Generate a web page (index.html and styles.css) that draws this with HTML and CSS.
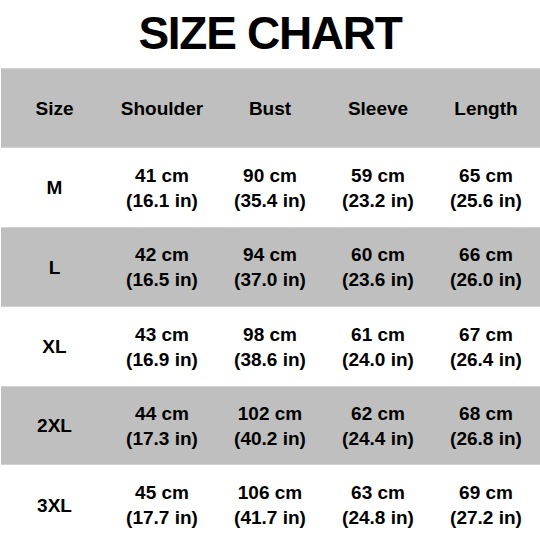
FILE: index.html
```html
<!DOCTYPE html>
<html>
<head>
<meta charset="utf-8">
<link rel="stylesheet" href="styles.css">
</head>
<body>
<div class="page">
  <h1 class="title">SIZE CHART</h1>
  <div class="chart">
    <div class="row shade head">
      <div class="cell">Size</div>
      <div class="cell">Shoulder</div>
      <div class="cell">Bust</div>
      <div class="cell">Sleeve</div>
      <div class="cell">Length</div>
    </div>
    <div class="row r79">
      <div class="cell">M</div>
      <div class="cell">41 cm<br>(16.1 in)</div>
      <div class="cell">90 cm<br>(35.4 in)</div>
      <div class="cell">59 cm<br>(23.2 in)</div>
      <div class="cell">65 cm<br>(25.6 in)</div>
    </div>
    <div class="row shade">
      <div class="cell">L</div>
      <div class="cell">42 cm<br>(16.5 in)</div>
      <div class="cell">94 cm<br>(37.0 in)</div>
      <div class="cell">60 cm<br>(23.6 in)</div>
      <div class="cell">66 cm<br>(26.0 in)</div>
    </div>
    <div class="row r79">
      <div class="cell">XL</div>
      <div class="cell">43 cm<br>(16.9 in)</div>
      <div class="cell">98 cm<br>(38.6 in)</div>
      <div class="cell">61 cm<br>(24.0 in)</div>
      <div class="cell">67 cm<br>(26.4 in)</div>
    </div>
    <div class="row shade r79">
      <div class="cell">2XL</div>
      <div class="cell">44 cm<br>(17.3 in)</div>
      <div class="cell">102 cm<br>(40.2 in)</div>
      <div class="cell">62 cm<br>(24.4 in)</div>
      <div class="cell">68 cm<br>(26.8 in)</div>
    </div>
    <div class="row">
      <div class="cell">3XL</div>
      <div class="cell">45 cm<br>(17.7 in)</div>
      <div class="cell">106 cm<br>(41.7 in)</div>
      <div class="cell">63 cm<br>(24.8 in)</div>
      <div class="cell">69 cm<br>(27.2 in)</div>
    </div>
  </div>
</div>
</body>
</html>
```
FILE: styles.css
```css
html, body {
  margin: 0;
  padding: 0;
  background: #ffffff;
}
body {
  font-family: "Liberation Sans", Arial, sans-serif;
  font-weight: bold;
  color: #000000;
  width: 540px;
  height: 540px;
  overflow: hidden;
}
.page {
  display: flex;
  flex-direction: column;
}
.title {
  margin: 0;
  height: 68px;
  font-size: 46px;
  letter-spacing: -1.3px;
  line-height: 66px;
  text-align: center;
  font-weight: bold;
}
.chart {
  display: flex;
  flex-direction: column;
  margin-left: 1px;
}
.row {
  display: grid;
  grid-template-columns: 107px 108px 108px 108px 108px;
  height: 80px;
  box-sizing: border-box;
}
.row.r79 {
  height: 79px;
}
.shade {
  background: #bfbfbf;
  border-top: 1px solid #d2d2d2;
  border-bottom: 1px solid #d2d2d2;
}
.cell {
  display: flex;
  align-items: center;
  justify-content: center;
  text-align: center;
  font-size: 19px;
  line-height: 25px;
}
```
